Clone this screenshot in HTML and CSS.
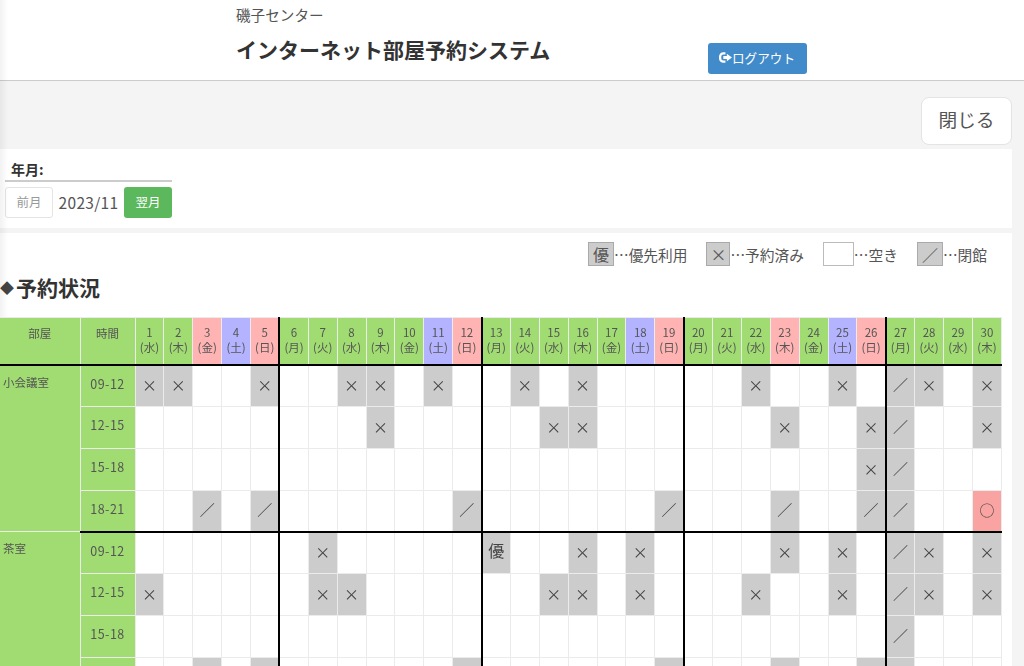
FILE: index.html
```html
<!DOCTYPE html>
<html lang="ja">
<head>
<meta charset="utf-8">
<title>インターネット部屋予約システム</title>
<link rel="stylesheet" href="styles.css">
</head>
<body>
<header class="site-header">
  <div class="brand">
    <p class="center-name">磯子センター</p>
    <div class="title-row">
      <h1 class="system-title">インターネット部屋予約システム</h1>
      <a class="btn-logout"><svg class="logout-icon" viewBox="0.5 1.5 11.1 9"><path d="M6 1.5H4.2A3.7 3.7 0 0 0 .5 5.2v1.6a3.7 3.7 0 0 0 3.7 3.7H6V8.6H4.3A1.9 1.9 0 0 1 2.4 6.7V5.3a1.9 1.9 0 0 1 1.9-1.9H6z"/><path d="M4.2 4.8h3V2.8L11.6 6 7.2 9.2V7.2h-3z"/></svg>ログアウト</a>
    </div>
  </div>
</header>
<main class="content">
  <div class="close-row"><a class="btn-close">閉じる</a></div>
  <section class="panel month-panel">
    <div class="month-box">
      <div class="month-label">年月:</div>
      <div class="month-nav">
        <a class="btn-month prev">前月</a>
        <span class="month-value">2023/11</span>
        <a class="btn-month next">翌月</a>
      </div>
    </div>
  </section>
  <section class="panel status-panel">
    <div class="legend">
      <span class="legend-item"><span class="swatch grey wide1">優</span>…優先利用</span>
      <span class="legend-item"><span class="swatch grey wide2">×</span>…予約済み</span>
      <span class="legend-item"><span class="swatch wide3"></span>…空き</span>
      <span class="legend-item"><span class="swatch grey wide1">／</span>…閉館</span>
    </div>
    <h2 class="status-title"><span class="diamond">◆</span>予約状況</h2>
    <table class="calendar">
      <colgroup><col class="col-room"><col class="col-time"></colgroup>
      <thead>
        <tr>
          <th class="label">部屋</th><th class="label">時間</th>
          <th>1<br>(水)</th><th>2<br>(木)</th><th class="hol">3<br>(金)</th><th class="sat">4<br>(土)</th><th class="hol">5<br>(日)</th>
          <th class="wk">6<br>(月)</th><th>7<br>(火)</th><th>8<br>(水)</th><th>9<br>(木)</th><th>10<br>(金)</th><th class="sat">11<br>(土)</th><th class="hol">12<br>(日)</th>
          <th class="wk">13<br>(月)</th><th>14<br>(火)</th><th>15<br>(水)</th><th>16<br>(木)</th><th>17<br>(金)</th><th class="sat">18<br>(土)</th><th class="hol">19<br>(日)</th>
          <th class="wk">20<br>(月)</th><th>21<br>(火)</th><th>22<br>(水)</th><th class="hol">23<br>(木)</th><th>24<br>(金)</th><th class="sat">25<br>(土)</th><th class="hol">26<br>(日)</th>
          <th class="wk">27<br>(月)</th><th>28<br>(火)</th><th>29<br>(水)</th><th>30<br>(木)</th>
        </tr>
      </thead>
      <tbody>
        <tr>
          <th class="room" rowspan="4">小会議室</th><th class="time">09-12</th>
          <td class="g">×</td><td class="g">×</td><td></td><td></td><td class="g">×</td>
          <td class="wk"></td><td></td><td class="g">×</td><td class="g">×</td><td></td><td class="g">×</td><td></td>
          <td class="wk"></td><td class="g">×</td><td></td><td class="g">×</td><td></td><td></td><td></td>
          <td class="wk"></td><td></td><td class="g">×</td><td></td><td></td><td class="g">×</td><td></td>
          <td class="wk g">／</td><td class="g">×</td><td></td><td class="g">×</td>
        </tr>
        <tr>
          <th class="time">12-15</th>
          <td></td><td></td><td></td><td></td><td></td>
          <td class="wk"></td><td></td><td></td><td class="g">×</td><td></td><td></td><td></td>
          <td class="wk"></td><td></td><td class="g">×</td><td class="g">×</td><td></td><td></td><td></td>
          <td class="wk"></td><td></td><td></td><td class="g">×</td><td></td><td></td><td class="g">×</td>
          <td class="wk g">／</td><td></td><td></td><td class="g">×</td>
        </tr>
        <tr>
          <th class="time">15-18</th>
          <td></td><td></td><td></td><td></td><td></td>
          <td class="wk"></td><td></td><td></td><td></td><td></td><td></td><td></td>
          <td class="wk"></td><td></td><td></td><td></td><td></td><td></td><td></td>
          <td class="wk"></td><td></td><td></td><td></td><td></td><td></td><td class="g">×</td>
          <td class="wk g">／</td><td></td><td></td><td></td>
        </tr>
        <tr class="room-end">
          <th class="time">18-21</th>
          <td></td><td></td><td class="g">／</td><td></td><td class="g">／</td>
          <td class="wk"></td><td></td><td></td><td></td><td></td><td></td><td class="g">／</td>
          <td class="wk"></td><td></td><td></td><td></td><td></td><td></td><td class="g">／</td>
          <td class="wk"></td><td></td><td></td><td class="g">／</td><td></td><td></td><td class="g">／</td>
          <td class="wk g">／</td><td></td><td></td><td class="free">○</td>
        </tr>
        <tr>
          <th class="room" rowspan="4">茶室</th><th class="time">09-12</th>
          <td></td><td></td><td></td><td></td><td></td>
          <td class="wk"></td><td class="g">×</td><td></td><td></td><td></td><td></td><td></td>
          <td class="wk g pri">優</td><td></td><td></td><td class="g">×</td><td></td><td class="g">×</td><td></td>
          <td class="wk"></td><td></td><td></td><td class="g">×</td><td></td><td class="g">×</td><td></td>
          <td class="wk g">／</td><td class="g">×</td><td></td><td class="g">×</td>
        </tr>
        <tr>
          <th class="time">12-15</th>
          <td class="g">×</td><td></td><td></td><td></td><td></td>
          <td class="wk"></td><td class="g">×</td><td class="g">×</td><td></td><td></td><td></td><td></td>
          <td class="wk"></td><td></td><td class="g">×</td><td class="g">×</td><td></td><td class="g">×</td><td></td>
          <td class="wk"></td><td></td><td class="g">×</td><td></td><td></td><td class="g">×</td><td></td>
          <td class="wk g">／</td><td class="g">×</td><td></td><td class="g">×</td>
        </tr>
        <tr>
          <th class="time">15-18</th>
          <td></td><td></td><td></td><td></td><td></td>
          <td class="wk"></td><td></td><td></td><td></td><td></td><td></td><td></td>
          <td class="wk"></td><td></td><td></td><td></td><td></td><td></td><td></td>
          <td class="wk"></td><td></td><td></td><td></td><td></td><td></td><td></td>
          <td class="wk g">／</td><td></td><td></td><td></td>
        </tr>
        <tr class="room-end">
          <th class="time"></th>
          <td></td><td></td><td class="g"></td><td></td><td class="g"></td>
          <td class="wk"></td><td></td><td></td><td></td><td></td><td></td><td class="g"></td>
          <td class="wk"></td><td></td><td></td><td></td><td></td><td></td><td class="g"></td>
          <td class="wk"></td><td></td><td></td><td class="g"></td><td></td><td></td><td class="g"></td>
          <td class="wk g"></td><td></td><td></td><td></td>
        </tr>
      </tbody>
    </table>
  </section>
</main>
</body>
</html>
```
FILE: styles.css
```css
* { box-sizing: border-box; }
html, body { margin: 0; height: 666px; overflow: hidden; }
body {
  background: #f4f4f4;
  color: #555;
  font-family: "Noto Sans CJK JP", "Noto Sans", sans-serif;
  font-size: 14px;
}
body::before {
  content: "";
  position: fixed;
  top: 0;
  left: 0;
  bottom: 0;
  width: 8px;
  background: linear-gradient(to right, rgba(0, 0, 0, .05), rgba(0, 0, 0, 0));
  pointer-events: none;
}
.site-header {
  background: #fff;
  height: 81px;
  border-bottom: 1px solid #ccc;
  padding: 5px 0 0 236px;
}
.center-name { margin: 0; font-size: 14.6px; line-height: 20px; color: #555; }
.title-row { display: flex; align-items: flex-start; margin-top: 10px; }
.system-title {
  margin: 0;
  width: 472px;
  font-size: 21px;
  line-height: 28px;
  font-weight: 700;
  color: #333;
  white-space: nowrap;
}
.btn-logout {
  display: flex;
  align-items: center;
  width: 99px;
  height: 31px;
  margin-top: 8px;
  padding: 0 0 3px 11px;
  background: #428bca;
  border-radius: 3px;
  color: #fff;
  font-size: 12.6px;
}
.logout-icon { width: 13px; height: 11px; fill: #fff; flex: none; }
.content { padding-right: 12px; }
.close-row { display: flex; justify-content: flex-end; padding-top: 16px; height: 68px; }
.btn-close {
  display: flex;
  align-items: center;
  justify-content: center;
  width: 91px;
  height: 48px;
  padding-bottom: 5px;
  background: #fff;
  border: 1px solid #e4e4e4;
  border-radius: 8px;
  color: #555;
  font-size: 18.7px;
}
.panel { background: #fff; }
.month-panel { height: 79px; padding: 8px 0 0 5px; margin-bottom: 5px; }
.month-box { width: 167px; }
.month-label {
  height: 25px;
  padding-left: 6px;
  border-bottom: 2px solid #ccc;
  font-weight: 700;
  line-height: 24px;
  color: #333;
}
.month-nav { display: flex; align-items: center; justify-content: space-between; margin-top: 5px; }
.btn-month {
  display: flex;
  align-items: center;
  justify-content: center;
  width: 48px;
  height: 31px;
  padding-bottom: 2px;
  border-radius: 3px;
  font-size: 12.5px;
}
.btn-month.prev { background: #fff; border: 1px solid #e4e4e4; color: #999; }
.btn-month.next { background: #5cb85c; color: #fff; }
.month-value { font-size: 15.5px; letter-spacing: .3px; padding-bottom: 2px; }
.status-panel { height: 440px; overflow: hidden; }
.legend {
  display: flex;
  justify-content: flex-end;
  gap: 19px;
  height: 34px;
  padding: 9px 25px 0 0;
}
.legend-item { display: flex; align-items: center; height: 24px; font-size: 14.7px; }
.swatch {
  display: flex;
  align-items: center;
  justify-content: center;
  height: 24px;
  border: 1px solid #bbb;
  font-size: 16px;
}
.swatch.grey { background: #ccc; border-color: #aaa; }
.wide1 { width: 26px; }
.wide2 { width: 24px; }
.wide3 { width: 31px; }
.status-title {
  display: flex;
  align-items: center;
  height: 50px;
  padding-bottom: 10px;
  margin: 0;
  font-size: 21px;
  font-weight: 700;
  color: #333;
}
.diamond { width: 16px; font-size: 14px; color: #444; }
.calendar {
  width: 1002px;
  table-layout: fixed;
  border-collapse: collapse;
  font-size: 11.5px;
  will-change: transform;
}
.col-room { width: 80px; }
.col-time { width: 55px; }
.calendar th, .calendar td { border: 1px solid #ebebeb; padding: 0; text-align: center; }
.calendar th { font-weight: 400; background: #a0dc72; color: #555; }
.calendar thead th { height: 47px; line-height: 15px; padding-bottom: 2px; border-bottom: 2px solid #000; }
.calendar thead th.label { vertical-align: top; padding: 8px 0 0; }
.calendar th.hol { background: #ffb3b3; }
.calendar th.sat { background: #b3b3ff; }
.calendar th.room { text-align: left; vertical-align: top; padding: 8px 0 0 3px; border-left: 0; }
.calendar th.time { vertical-align: top; padding-top: 8px; font-size: 12.5px; letter-spacing: .5px; }
.calendar thead th:first-child { border-left: 0; }
.calendar tbody tr { height: 42px; }
.calendar tbody tr.room-end { height: 41px; }
.calendar td { font-size: 15px; line-height: 16px; padding-bottom: 1px; color: #444; background: #fff; }
.calendar td.g { background: #ccc; }
.calendar td.pri { font-size: 16px; vertical-align: top; padding-top: 9px; }
.calendar td.free { background: #f9a3a3; }
.calendar .wk { border-left: 2px solid #000; }
.room-end th, .room-end td { border-bottom: 2px solid #000; }
```
